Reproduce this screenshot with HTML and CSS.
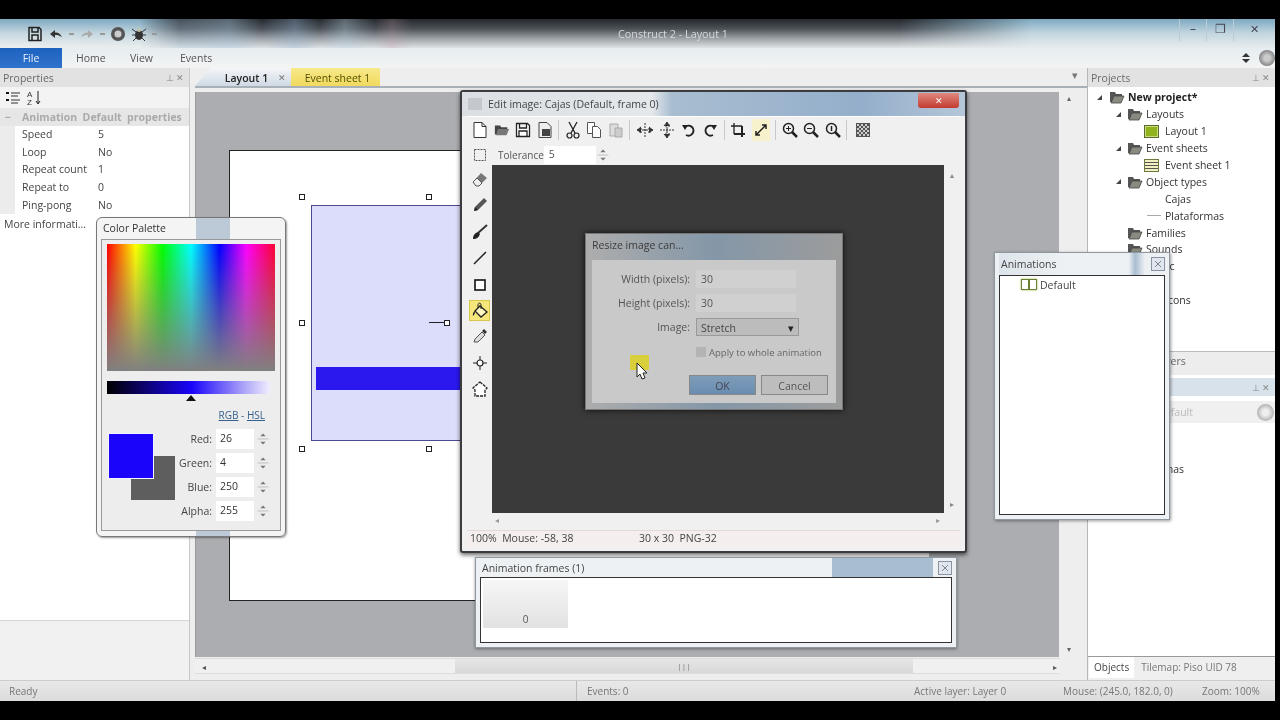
FILE: index.html
```html
<!DOCTYPE html>
<html lang="en">
<head>
<meta charset="utf-8">
<title>Construct 2 - Layout 1</title>
<link rel="stylesheet" href="styles.css">
</head>
<body>
<svg class="sprite" width="0" height="0">
  <symbol id="folder" viewBox="0 0 16 14"><path d="M1 2h5l1 2h6v2H5L3 12H1z" fill="#555"/><path d="M5 6h10l-3 7H2z" fill="#8a8a80" stroke="#444" stroke-width=".8"/></symbol>
  <symbol id="spin" viewBox="0 0 14 22"><path d="M4 8l3-3 3 3z M4 14l3 3 3-3z" fill="#777"/><path d="M1 11h12" stroke="#bbb"/></symbol>
  <symbol id="pin" viewBox="0 0 14 14"><rect x=".5" y=".5" width="13" height="13" fill="#dfe6ee" stroke="#8a93a0"/><path d="M4 4l6 6M10 4l-6 6" stroke="#667" stroke-width=".8"/></symbol>
</svg>
<div class="screen">
  <div class="app">
    <header class="titlebar">
      <div class="qat">
        <svg width="16" height="16" viewBox="0 0 16 16"><path d="M2 1.500h10l2 2v11H2z M5 2v4h6V2 M5 14V9h6v5" fill="none" stroke="#222" stroke-width="1.500"/></svg>
        <svg width="16" height="14" viewBox="0 0 16 14"><path d="M2 7l5-4v2.500c4 0 6 2 7 5-2-2-4-2.500-7-2.500v3z" fill="#333"/></svg>
        <span class="qat-dash"></span>
        <svg width="16" height="14" viewBox="0 0 16 14"><path d="M14 7L9 3v2.500c-4 0-6 2-7 5 2-2 4-2.500 7-2.500v3z" fill="#aaa"/></svg>
        <span class="qat-dash"></span>
        <svg width="16" height="16" viewBox="0 0 16 16"><circle cx="8" cy="8" r="7" fill="#555"/><circle cx="8" cy="8" r="3.500" fill="#ccc"/></svg>
        <svg width="16" height="16" viewBox="0 0 16 16"><ellipse cx="8" cy="9" rx="4" ry="5" fill="#333"/><path d="M1 3l4 3M15 3l-4 3M1 9h3M15 9h-3M2 15l3-3M14 15l-3-3" stroke="#333"/><circle cx="8" cy="4" r="2" fill="#c4c4a8"/></svg>
        <span class="qat-dash"></span>
      </div>
      <div class="title-text">Construct 2 - Layout 1</div>
      <div class="win-controls">
        <span class="wc">&#8211;</span><span class="wc">&#10064;</span><span class="wc wc-x">&#10005;</span>
      </div>
    </header>
    <nav class="ribbon">
      <div class="file-tab">File</div>
      <div class="rib-tab">Home</div>
      <div class="rib-tab">View</div>
      <div class="rib-tab">Events</div>
      <div class="rib-right">
        <svg width="12" height="14" viewBox="0 0 12 14"><path d="M2 6l4-4 4 4zM2 8l4 4 4-4z" fill="#333"/></svg>
        <span class="help-ball"></span>
      </div>
    </nav>
    <main class="main">
      <aside class="left">
        <div class="dock-head"><span>Properties</span><span class="dock-btns">&#8869;&nbsp;&#10005;</span></div>
        <div class="prop-tools">
          <svg width="16" height="14" viewBox="0 0 16 14"><path d="M6 2h9M6 5h7M6 9h9M6 12h7" stroke="#333"/><path d="M1 2h3M1 9h3" stroke="#111" stroke-width="2"/></svg>
          <svg width="16" height="16" viewBox="0 0 16 16"><path d="M12 1v12M10 11l2 3 2-3" stroke="#222" fill="none"/><text x="1" y="7" class="sort-text">A</text><text x="1" y="15" class="sort-text">Z</text></svg>
        </div>
        <div class="prop-section"><span class="prop-minus">&#8722;</span>Animation&nbsp; Default&nbsp; properties</div>
        <div class="prop-row"><span class="prop-key">Speed</span><span>5</span></div>
        <div class="prop-row"><span class="prop-key">Loop</span><span>No</span></div>
        <div class="prop-row"><span class="prop-key">Repeat count</span><span>1</span></div>
        <div class="prop-row"><span class="prop-key">Repeat to</span><span>0</span></div>
        <div class="prop-row"><span class="prop-key">Ping-pong</span><span>No</span></div>
        <div class="prop-more">More informati...</div>
        <div class="prop-spacer"></div>
        <div class="prop-help"></div>
      </aside>
      <section class="centre">
        <div class="doc-tabs">
          <div class="doc-tab doc-active">Layout 1<span class="doc-x">&#10005;</span></div>
          <div class="doc-tab doc-yellow">Event sheet 1</div>
          <span class="doc-menu">&#9662;</span>
        </div>
        <div class="doc-body">
          <div class="canvas-row">
            <div class="canvas">
              <div class="page"></div>
              <div class="object"><div class="object-bar"></div></div>
              <i class="handle h1"></i><i class="handle h2"></i><i class="handle h3"></i><i class="handle h4"></i><i class="handle h5"></i>
              <i class="rot-line"></i><i class="handle h6"></i>
            </div>
            <div class="vscroll"><span>&#9652;</span><span>&#9662;</span></div>
          </div>
          <div class="hscroll"><span class="arr">&#9666;</span><div class="hthumb"><span class="grip">|||</span></div><span class="arr">&#9656;</span></div>
        </div>
      </section>
      <aside class="right">
        <div class="dock-head"><span>Projects</span><span class="dock-btns">&#8869;&nbsp;&#10005;</span></div>
        <ul class="tree">
          <li class="t0 bold"><b class="tw"></b><svg class="fo"><use href="#folder"/></svg>New project*</li>
          <li class="t1"><b class="tw"></b><svg class="fo"><use href="#folder"/></svg>Layouts</li>
          <li class="t2"><span class="ico-layout"></span>Layout 1</li>
          <li class="t1"><b class="tw"></b><svg class="fo"><use href="#folder"/></svg>Event sheets</li>
          <li class="t2"><span class="ico-sheet"></span>Event sheet 1</li>
          <li class="t1"><b class="tw"></b><svg class="fo"><use href="#folder"/></svg>Object types</li>
          <li class="t3">Cajas</li>
          <li class="t3 dash">Plataformas</li>
          <li class="t1 nw"><svg class="fo"><use href="#folder"/></svg>Families</li>
          <li class="t1 nw"><svg class="fo"><use href="#folder"/></svg>Sounds</li>
          <li class="t1 nw"><svg class="fo"><use href="#folder"/></svg>Music</li>
          <li class="t1 nw"><svg class="fo"><use href="#folder"/></svg>Files</li>
          <li class="t3">Icons</li>
        </ul>
        <div class="layers-tab">Layers</div>
        <div class="obj-head"><span>Objects</span><span class="dock-btns">&#8869;&nbsp;&#10005;</span></div>
        <div class="obj-search"><span class="obj-filter">Default</span><span class="help-ball small"></span></div>
        <ul class="obj-list"><li>Cajas</li><li>Plataformas</li></ul>
        <div class="right-tabs"><span class="rt-active">Objects</span><span class="rt-info">Tilemap: Piso UID 78</span></div>
      </aside>
    </main>
    <footer class="status">
      <span class="st-ready">Ready</span>
      <span class="st-events">Events: 0</span>
      <span class="st-layer">Active layer: Layer 0</span>
      <span class="st-mouse">Mouse: (245.0, 182.0, 0)</span>
      <span class="st-zoom">Zoom: 100%</span>
    </footer>
  </div>

  <section class="win palette">
    <div class="pal-title">Color Palette</div>
    <div class="pal-body">
      <div class="pal-grad"></div>
      <div class="pal-lum"></div>
      <div class="pal-tri"></div>
      <div class="pal-links"><u>RGB</u> - <u>HSL</u></div>
      <div class="pal-lower">
        <div class="swatches"><div class="sw-back"></div><div class="sw-front"></div></div>
        <div class="pal-fields">
          <div class="pf"><label>Red:</label><span class="pf-in">26</span><svg class="pf-spin"><use href="#spin"/></svg></div>
          <div class="pf"><label>Green:</label><span class="pf-in">4</span><svg class="pf-spin"><use href="#spin"/></svg></div>
          <div class="pf"><label>Blue:</label><span class="pf-in">250</span><svg class="pf-spin"><use href="#spin"/></svg></div>
          <div class="pf"><label>Alpha:</label><span class="pf-in">255</span><svg class="pf-spin"><use href="#spin"/></svg></div>
        </div>
      </div>
    </div>
  </section>

  <section class="win editor">
    <div class="ed-title"><span class="ed-name">Edit image: Cajas (Default, frame 0)</span><span class="ed-close">&#10005;</span></div>
    <div class="ed-tools">
      <svg width="16" height="18" viewBox="0 0 16 18"><path d="M2 1.500h8l4 4v11H2z M10 1.500v4h4" fill="#fff" stroke="#333"/></svg>
      <svg width="16" height="18" viewBox="0 0 18 18"><path d="M1 4h6l1 2h7v2H5l-2 6H1z" fill="#444"/><path d="M5 8h12l-3 7H2z" fill="#777"/></svg>
      <svg width="16" height="16" viewBox="0 0 16 16"><path d="M1.500 1.500h11l2 2v11h-13z M4.500 2v4h7V2 M4 14V9h8v5" fill="#fff" stroke="#222" stroke-width="1.300"/></svg>
      <svg width="16" height="18" viewBox="0 0 16 18"><path d="M2 1.500h8l4 4v11H2z" fill="#eee" stroke="#444"/><rect x="5" y="8" width="8" height="7" fill="#444"/></svg>
      <i class="sep"></i>
      <svg width="16" height="18" viewBox="0 0 16 18"><path d="M4 1l6 11M12 1L6 12" stroke="#222" stroke-width="1.300"/><circle cx="4.500" cy="14.500" r="2.500" fill="none" stroke="#222" stroke-width="1.200"/><circle cx="11.500" cy="14.500" r="2.500" fill="none" stroke="#222" stroke-width="1.200"/></svg>
      <svg width="16" height="18" viewBox="0 0 16 18"><path d="M1.500 1.500h7v11h-7z" fill="#fff" stroke="#555"/><path d="M6.500 5.500h5l3 3v8h-8z" fill="#fff" stroke="#555"/></svg>
      <svg width="16" height="18" viewBox="0 0 16 18"><path d="M2 3h8v12H2z" fill="#ddd" stroke="#aaa"/><path d="M7 7h7v9H7z" fill="#ccc" stroke="#aaa"/></svg>
      <i class="sep"></i>
      <svg width="18" height="16" viewBox="0 0 18 16"><path d="M1 8l4-3v6zM17 8l-4-3v6zM9 1v14" stroke="#333" fill="#333" stroke-dasharray="2 1"/><path d="M6 8h6" stroke="#333"/></svg>
      <svg width="16" height="18" viewBox="0 0 16 18"><path d="M8 1L5 5h6zM8 17l-3-4h6zM1 9h14" stroke="#333" fill="#333" stroke-dasharray="2 1"/><path d="M8 6v6" stroke="#333"/></svg>
      <svg width="16" height="16" viewBox="0 0 16 16"><path d="M4 5a5 5 0 1 1 1 8" fill="none" stroke="#222" stroke-width="2"/><path d="M1 3l6 0-3 5z" fill="#222"/></svg>
      <svg width="16" height="16" viewBox="0 0 16 16"><path d="M12 5a5 5 0 1 0-1 8" fill="none" stroke="#222" stroke-width="2"/><path d="M15 3l-6 0 3 5z" fill="#222"/></svg>
      <i class="sep"></i>
      <svg width="16" height="16" viewBox="0 0 16 16"><path d="M4 1v11M1 4h11" stroke="#222" stroke-width="1.300"/><path d="M4 12h11M12 4v11" stroke="#222" stroke-width="2"/></svg>
      <span class="ed-active"><svg width="16" height="16" viewBox="0 0 16 16"><path d="M3 13L13 3M9 3h4v4M3 9v4h4" fill="none" stroke="#222" stroke-width="1.500"/></svg></span>
      <i class="sep"></i>
      <svg width="16" height="16" viewBox="0 0 16 16"><circle cx="6.500" cy="6.500" r="5" fill="#eee" stroke="#222" stroke-width="1.500"/><path d="M10 10l5 5" stroke="#222" stroke-width="2.500"/><path d="M4 6.500h5M6.500 4v5" stroke="#222"/></svg>
      <svg width="16" height="16" viewBox="0 0 16 16"><circle cx="6.500" cy="6.500" r="5" fill="#eee" stroke="#222" stroke-width="1.500"/><path d="M10 10l5 5" stroke="#222" stroke-width="2.500"/><path d="M4 6.500h5" stroke="#222"/></svg>
      <svg width="16" height="16" viewBox="0 0 16 16"><circle cx="6.500" cy="6.500" r="5" fill="#eee" stroke="#222" stroke-width="1.500"/><path d="M10 10l5 5" stroke="#222" stroke-width="2.500"/><path d="M6.500 4v5" stroke="#222" stroke-width="1.500"/></svg>
      <i class="sep"></i>
      <span class="ed-checker"></span>
    </div>
    <div class="ed-row2">
      <svg width="14" height="14" viewBox="0 0 14 14"><rect x="1.500" y="1.500" width="11" height="11" fill="none" stroke="#555" stroke-dasharray="2 1"/></svg>
      <span class="ed-tol">Tolerance</span>
      <span class="ed-tolin">5</span>
      <svg class="tol-spin"><use href="#spin"/></svg>
    </div>
    <div class="ed-work">
      <div class="ed-side">
        <svg width="16" height="16" viewBox="0 0 16 16"><path d="M1 11L9 2l6 5-8 8H4z" fill="#777"/><path d="M1 11l4-4 5 5-3 3H4z" fill="#eee" stroke="#555"/></svg>
        <svg width="16" height="16" viewBox="0 0 16 16"><path d="M2 14l1-4L12 1l3 3-9 9z" fill="#555"/><path d="M2 14l1-4 3 3z" fill="#222"/></svg>
        <svg width="16" height="16" viewBox="0 0 16 16"><path d="M15 1L6 9" stroke="#333" stroke-width="2"/><path d="M1 15c0-4 2-6 5-7l2 2c-1 3-3 5-7 5z" fill="#222"/></svg>
        <svg width="16" height="16" viewBox="0 0 16 16"><path d="M2 14L14 2" stroke="#222" stroke-width="1.500"/></svg>
        <svg width="16" height="16" viewBox="0 0 16 16"><rect x="3" y="3" width="10" height="10" fill="#fff" stroke="#111" stroke-width="1.600"/></svg>
        <span class="ed-fill"><svg width="16" height="16" viewBox="0 0 16 16"><path d="M8 4l7 6-6 5-6-6z" fill="#fff6c0" stroke="#222" stroke-width="1.300"/><path d="M6 6V3c0-2.500 3-2.500 3 0v4" fill="none" stroke="#222"/><path d="M3 9C1 10 .5 12 1 14c1.500-1 2-3 2-5z" fill="#222"/></svg></span>
        <svg width="16" height="16" viewBox="0 0 16 16"><path d="M2 14l1-3 7-7 3 3-7 7z" fill="#ddd" stroke="#555"/><path d="M10 3l2-2 3 3-2 2z" fill="#333"/></svg>
        <svg width="16" height="16" viewBox="0 0 16 16"><circle cx="8" cy="8" r="3" fill="#fff" stroke="#222" stroke-width="1.200"/><path d="M8 1v4M8 11v4M1 8h4M11 8h4" stroke="#222"/></svg>
        <svg width="16" height="16" viewBox="0 0 16 16"><path d="M8 1l7 6-2 2v6H3V9L1 7z" fill="#fff" stroke="#222" stroke-width="1.300" stroke-dasharray="3 1"/></svg>
      </div>
      <div class="ed-canvas">
        <div class="dlg">
          <div class="dlg-title">Resize image can...</div>
          <div class="dlg-body">
            <div class="dlg-row"><label>Width (pixels):</label><span class="dlg-in">30</span></div>
            <div class="dlg-row"><label>Height (pixels):</label><span class="dlg-in">30</span></div>
            <div class="dlg-row"><label>Image:</label><span class="dlg-sel">Stretch<i>&#9662;</i></span></div>
            <div class="dlg-check"><i class="dlg-box"></i>Apply to whole animation</div>
            <div class="dlg-btns"><span class="dlg-ok">OK</span><span class="dlg-cancel">Cancel</span></div>
          </div>
        </div>
        <div class="cursor-mark">
          <svg width="14" height="20" viewBox="0 0 14 20"><path d="M2 1v14l3-3 2 5 3-1-2-5h4z" fill="#fff" stroke="#222"/></svg>
        </div>
      </div>
      <div class="ed-vs"><span>&#9652;</span><span>&#9656;</span></div>
    </div>
    <div class="ed-hs"><span>&#9666;</span><span>&#9656;</span></div>
    <div class="ed-status"><span class="es-a">100%&nbsp; Mouse: -58, 38</span><span>30 x 30&nbsp; PNG-32</span></div>
  </section>

  <section class="win frames">
    <div class="bar-title"><span>Animation frames (1)</span><svg class="pin"><use href="#pin"/></svg></div>
    <div class="list-box frames-box"><div class="thumb">0</div></div>
  </section>

  <section class="win anims">
    <div class="bar-title"><span>Animations</span><svg class="pin"><use href="#pin"/></svg></div>
    <div class="list-box anims-box"><div class="anim-row"><span class="ico-anim"></span>Default</div></div>
  </section>
</div>
</body>
</html>
```
FILE: styles.css
```css
* { box-sizing: border-box; }
html, body { margin: 0; height: 100%; background: #000; overflow: hidden; }
body { font-family: "Open Sans", "Noto Sans", sans-serif; font-size: 10.500px; color: #333; }
ul { list-style: none; margin: 0; padding: 0; }
.sprite { position: absolute; }
.screen { position: relative; width: 1280px; height: 720px; padding: 19px 5px 19px 0; filter: blur(.45px); }
.app { width: 1275px; height: 682px; display: flex; flex-direction: column; background: #ececec; }

.titlebar { height: 29px; display: flex; align-items: center; position: relative;
  background:
    linear-gradient(180deg, rgba(120,165,190,.95) 0, rgba(170,200,215,.6) 14px, rgba(232,238,241,.2) 28px),
    linear-gradient(90deg, #eceeee 0, #e8ecec 150px, #e4e9eb 1275px); }
.titlebar::before { content: ""; position: absolute; inset: 0;
  background:
    linear-gradient(90deg, transparent 100px, rgba(170,200,225,.4) 230px, transparent 262px, rgba(150,180,215,.35) 295px, transparent 320px, rgba(190,215,230,.35) 345px, transparent 375px, rgba(195,150,165,.25) 392px, transparent 412px),
    linear-gradient(180deg, #24282c 0, #4d5359 10px, #989ea3 19px, #dfe3e5 29px);
  -webkit-mask-image: linear-gradient(90deg, transparent 140px, #000 180px, #000 900px, transparent 1030px);
  mask-image: linear-gradient(90deg, transparent 140px, #000 180px, #000 900px, transparent 1030px); }
.qat { display: flex; align-items: center; gap: 5px; padding-left: 27px; position: relative; }
.qat-dash { width: 5px; height: 2px; background: #999; }
.title-text { position: absolute; left: 618px; top: 7px; color: #d4d8dc; font-size: 10.800px; }
.win-controls { margin-left: auto; display: flex; height: 23px; align-self: flex-start; position: relative; }
.wc { width: 27px; text-align: center; color: #445; font-size: 12px; line-height: 20px; border-left: 1px solid #b9ccd8; border-bottom: 1px solid #d8e2e8; }
.wc-x { width: 42px; font-size: 11px; }

.ribbon { height: 20px; display: flex; align-items: center; background: linear-gradient(180deg, #e6edf0, #f3f4f4); color: #555; }
.file-tab { width: 62px; height: 20px; background: linear-gradient(180deg, #1e62c0, #2f73cc); color: #e8f0fb; text-align: center; line-height: 20px; margin-right: 14px; }
.rib-tab { width: 50px; line-height: 20px; }
.rib-tab:nth-child(2) { width: 54px; }
.rib-right { margin-left: auto; display: flex; align-items: center; gap: 7px; }
.help-ball { width: 16px; height: 16px; border-radius: 50%; background: radial-gradient(circle, #ccc 25%, #666 90%); display: block; }
.help-ball.small { width: 17px; height: 17px; background: radial-gradient(circle, #eee 25%, #999 90%); }

.main { flex: 1; display: flex; min-height: 0; }
.left { width: 190px; display: flex; flex-direction: column; background: #fff; border-right: 1px solid #c8c8c8; }
.dock-head { height: 19px; display: flex; justify-content: space-between; align-items: center; padding: 0 5px 0 3px; background: #e2e2e2; color: #6a6a6a; flex: none; }
.dock-btns { font-size: 9px; color: #888; }
.prop-tools { height: 21px; flex: none; display: flex; align-items: center; gap: 5px; padding-left: 5px; background: #f3f3f3; }
.sort-text { font-size: 8px; font-family: "Liberation Sans", sans-serif; fill: #333; }
.prop-section { height: 18px; flex: none; background: #e6e6e6; color: #aaa; font-weight: 700; line-height: 18px; white-space: nowrap; overflow: hidden; }
.prop-minus { display: inline-block; width: 22px; padding-left: 5px; }
.prop-row { height: 17.700px; flex: none; display: flex; line-height: 17.700px; background: linear-gradient(90deg, #ececec 15px, #fff 15px); color: #444; }
.prop-key { width: 98px; padding-left: 22px; flex: none; }
.prop-more { height: 19px; flex: none; margin-top: 1px; line-height: 19px; padding-left: 4px; color: #444; }
.prop-spacer { flex: 1; }
.prop-help { height: 60px; flex: none; background: #f1f1f1; border-top: 1px solid #d4d4d4; }

.centre { flex: 1; min-width: 0; display: flex; flex-direction: column; padding-left: 5px; background: #eeeeee; }
.doc-tabs { height: 20px; flex: none; display: flex; align-items: stretch; border-bottom: 2px solid #a8b0b8; position: relative; }
.doc-tab { display: flex; align-items: center; justify-content: center; color: #222; padding-top: 1px; }
.doc-active { width: 96px; font-weight: 600; padding-left: 25px; background: linear-gradient(180deg, #f4f6f8, #cfd9e4); clip-path: polygon(0 100%, 16px 0, 100% 0, 100% 100%); gap: 10px; }
.doc-x { color: #777; font-weight: 400; font-size: 9px; }
.doc-yellow { width: 89px; padding-left: 4px; background: linear-gradient(180deg, #f7e98a, #f1d95e); color: #555000; }
.doc-menu { margin-left: auto; margin-right: 9px; color: #777; }
.doc-body { flex: 1; display: flex; flex-direction: column; min-height: 0; padding-top: 4px; }
.canvas-row { height: 565px; flex: none; display: flex; }
.canvas { width: 864px; position: relative; background: #acadb0; overflow: hidden; border-left: 1px solid #999; }
.page { position: absolute; left: 33px; top: 58px; width: 700px; height: 451px; background: #fff; border-left: 1px solid #222; border-top: 1px solid #222; border-bottom: 1px solid #222; }
.object { position: absolute; left: 115px; top: 113px; width: 240px; height: 236px; background: #dcdcfb; border: 1px solid #4a4a8c; }
.object-bar { position: absolute; left: 4px; top: 161px; width: 230px; height: 23px; background: #2a18ee; }
.handle { position: absolute; width: 6px; height: 6px; background: #fff; border: 1px solid #222; }
.h1 { left: 103px; top: 102px; } .h2 { left: 230px; top: 102px; } .h3 { left: 103px; top: 228px; }
.h4 { left: 103px; top: 354px; } .h5 { left: 230px; top: 354px; } .h6 { left: 248px; top: 228px; }
.rot-line { position: absolute; left: 233px; top: 230px; width: 16px; height: 1px; background: #222; }
.vscroll { width: 20px; display: flex; flex-direction: column; justify-content: space-between; align-items: center; color: #666; font-size: 8px; background: #eee; padding-bottom: 3px; }
.hscroll { height: 16px; margin-top: 1px; margin-right: 27px; display: flex; align-items: center; justify-content: space-between; padding: 0 0 0 4px; background: #f0f0f0; border-top: 1px solid #ddd; border-bottom: 1px solid #ddd; font-size: 8px; color: #555; position: relative; }
.hthumb { position: absolute; left: 260px; width: 458px; height: 14px; background: linear-gradient(180deg, #e6e6e6, #d8d8d8); text-align: center; line-height: 14px; }
.arr { padding: 0 3px; }
.grip { color: #777; font-size: 8px; }

.right { width: 188px; flex: none; display: flex; flex-direction: column; background: #fff; border-left: 1px solid #b8b8b8; }
.tree { height: 264px; flex: none; padding-top: 2px; overflow: hidden; }
.tree li { height: 16.900px; display: flex; align-items: center; color: #333; white-space: nowrap; font-size: 10.500px; }
.tree .bold { font-weight: 700; color: #222; }
.t0 { padding-left: 9px; } .t1 { padding-left: 28px; } .t2 { padding-left: 56px; } .t3 { padding-left: 77px; }
.t1.nw { padding-left: 39px; }
.tw { width: 0; height: 0; border-left: 5px solid transparent; border-bottom: 5px solid #444; margin-right: 6px; }
.t0 .tw { margin-right: 7px; }
.fo { width: 16px; height: 14px; margin-right: 3px; flex: none; }
.ico-layout { width: 15px; height: 13px; margin-right: 6px; background: #8fb21d; border: 1px solid #5c6a30; box-shadow: inset 0 0 0 1px #c9dc7b; }
.ico-sheet { width: 15px; height: 13px; margin-right: 6px; border: 1px solid #6a7a40; background: repeating-linear-gradient(180deg, #f2f0c0 0 2px, #555 2px 3px); }
.dash { position: relative; }
.dash::before { content: ""; position: absolute; left: 59px; top: 8px; width: 14px; height: 1px; background: #aaa; }
.layers-tab { height: 24px; flex: none; background: #ededed; border-top: 1px solid #bbb; padding-left: 66px; line-height: 19px; color: #666; }
.obj-head { height: 18px; flex: none; margin-top: 3px; display: flex; justify-content: space-between; align-items: center; padding: 0 5px 0 4px; background: #d8e2ea; color: #666; }
.obj-search { height: 22px; flex: none; margin-top: 5px; display: flex; align-items: center; justify-content: flex-end; gap: 4px; padding-right: 1px; background: #f0f0f0; color: #bbb; }
.obj-filter { margin-right: 60px; }
.obj-list { flex: 1; padding: 21px 0 0 37px; }
.obj-list li { height: 17px; line-height: 17px; color: #333; }
.right-tabs { height: 24px; flex: none; display: flex; align-items: center; padding-bottom: 3px; border-top: 1px solid #999; background: #efefef; font-size: 10px; }
.rt-active { background: #fff; padding: 0 5px; line-height: 21px; margin: 0 7px 0 1px; color: #444; }
.rt-info { color: #777; }

.status { height: 21px; flex: none; position: relative; background: linear-gradient(180deg, #e8e8e8, #dcdcdc); color: #777; border-top: 1px solid #ccc; line-height: 20px; display: flex; font-size: 10px; }
.st-ready { width: 577px; padding-left: 9px; border-right: 1px solid #bbb; }
.st-events { width: 337px; padding-left: 10px; }
.st-layer { width: 149px; }
.st-mouse { width: 139px; }

.win { position: absolute; }
.palette { left: 96px; top: 217px; width: 190px; height: 320px; background: linear-gradient(90deg, #f4f4f4 99px, #bcc9d6 99px, #bcc9d6 133px, #f4f4f4 133px); border: 1px solid #777; border-radius: 6px; box-shadow: 1px 1px 2px rgba(0,0,0,.4); display: flex; flex-direction: column; }
.pal-title { height: 21px; flex: none; padding: 3px 6px; color: #333; font-size: 10.500px; }
.pal-body { flex: 1; margin: 0 4px 5px; border: 1px solid #999; padding: 4px 5px 0; display: flex; flex-direction: column; background: #ededed; }
.pal-grad { height: 127px; flex: none; width: 168px; background:
  linear-gradient(180deg, rgba(128,128,128,0), #808080),
  linear-gradient(90deg, #f00, #ff0 17%, #0f0 33%, #0ff 50%, #00f 67%, #f0f 83%, #f03); }
.pal-lum { width: 163px; height: 13px; flex: none; margin-top: 10px; background: linear-gradient(90deg, #000, #1a04fa 52%, #b0a8f8 85%, #f0eefe); }
.pal-tri { width: 0; height: 0; margin: 1px 0 0 79px; flex: none; border: 5px solid transparent; border-top: 0; border-bottom: 6px solid #111; }
.pal-links { margin: 7px 4px 0 0; text-align: right; color: #35608c; font-size: 10px; padding-right: 6px; height: 15px; line-height: 15px; flex: none; }
.pal-lower { display: flex; margin-top: 6px; flex: 1; position: relative; }
.swatches { width: 68px; height: 68px; flex: none; position: relative; margin: 5px 0 0 2px; }
.sw-back { position: absolute; left: 22px; top: 22px; width: 44px; height: 44px; background: #5e5e5e; }
.sw-front { position: absolute; left: 0; top: 0; width: 44px; height: 44px; background: #1a04fa; box-shadow: 0 0 0 1px #f4f4ff; }
.pal-fields { flex: 1; display: flex; flex-direction: column; gap: 4px; margin-left: -2px; }
.pf { height: 20px; display: flex; align-items: center; }
.pf label { width: 37px; text-align: right; color: #444; flex: none; }
.pf-in { width: 38px; height: 20px; margin-left: 4px; padding-left: 4px; line-height: 19px; background: #fff; flex: none; }
.pf-spin { width: 14px; height: 20px; margin-left: 2px; flex: none; }

.editor { left: 460px; top: 90px; width: 507px; height: 463px; background: #f0f0f0; border: 2px solid #3c3c40; border-radius: 3px; box-shadow: 0 2px 4px rgba(0,0,0,.6); display: flex; flex-direction: column; padding: 0 5px 3px; }
.ed-title { height: 24px; flex: none; margin: 0 -5px; padding: 0 6px 0 6px; display: flex; justify-content: space-between; align-items: center; color: #444; background: linear-gradient(90deg, #dadfe3 0, #e4e8eb 190px, #a8bdd0 210px, #94aecb 400px, #b4c6d8 500px); }
.ed-name { display: flex; align-items: center; gap: 6px; }
.ed-name::before { content: ""; width: 14px; height: 12px; background: #c4c8cc; }
.ed-close { width: 41px; height: 15px; margin-top: -7px; background: linear-gradient(180deg, #e08a80, #c23a30); color: #fff; text-align: center; font-size: 9px; line-height: 15px; border-radius: 0 0 3px 3px; }
.ed-tools { height: 26px; flex: none; display: flex; align-items: center; gap: 5.500px; padding-left: 5px; border-top: 1px solid #fff; }
.sep { width: 1px; height: 20px; background: #c8c8c8; }
.ed-active { display: flex; height: 22px; align-items: center; padding: 0 1px; background: #f8f2cc; }
.ed-checker { width: 14px; height: 14px; margin-left: 3px; background: repeating-conic-gradient(#555 0 25%, #ccc 0 50%) 0 0 / 4px 4px; border: 1px solid #555; }
.ed-row2 { height: 23px; flex: none; display: flex; align-items: center; padding: 2px 0 0 6px; }
.ed-tol { margin-left: 11px; color: #555; font-size: 10px; }
.ed-tolin { width: 52px; height: 18px; padding-left: 5px; line-height: 17px; background: #fff; color: #555; }
.tol-spin { width: 14px; height: 20px; }
.ed-work { height: 348px; flex: none; display: flex; }
.ed-side { width: 25px; flex: none; display: flex; flex-direction: column; align-items: center; gap: 10.400px; padding: 6px 0 0; }
.ed-fill { display: flex; width: 21px; height: 21px; margin: -3px 0; align-items: center; justify-content: center; background: #f5e77c; border: 1px solid #d8c84a; }
.ed-canvas { width: 452px; flex: none; position: relative; background: #3a3a3a; }
.ed-vs { flex: 1; display: flex; flex-direction: column; justify-content: space-between; align-items: center; color: #888; font-size: 8px; padding: 4px 0; }
.ed-hs { height: 17px; flex: none; display: flex; justify-content: space-between; padding: 0 20px 0 28px; color: #999; font-size: 8px; line-height: 14px; }
.ed-status { flex: 1; display: flex; align-items: center; padding: 0 0 3px 3px; background: #f4eeee; border-top: 1px solid #e4d8d8; color: #444; }
.es-a { width: 169px; }

.dlg { position: absolute; left: 93px; top: 68px; width: 258px; height: 177px; background: linear-gradient(90deg, #adadad, #8497a8 50%, #9c9c9c); border: 1px solid #777; box-shadow: 0 0 6px rgba(0,0,0,.8); padding: 0 6px 6px; display: flex; flex-direction: column; filter: blur(.7px); }
.dlg-title { height: 26px; flex: none; line-height: 22px; color: #3c3c3c; }
.dlg-body { flex: 1; background: #c9c9c9; padding-top: 10px; color: #555; display: flex; flex-direction: column; }
.dlg-row { height: 18px; display: flex; align-items: center; margin-bottom: 6px; }
.dlg-row label { width: 98px; text-align: right; margin-right: 6px; }
.dlg-in { width: 100px; height: 18px; padding-left: 5px; line-height: 18px; background: #d0d0d0; }
.dlg-sel { width: 103px; height: 18px; padding: 0 4px; line-height: 18px; background: #bcbcbc; border: 1px solid #999; color: #444; display: flex; justify-content: space-between; }
.dlg-sel i { font-style: normal; color: #222; }
.dlg-check { margin: 2px 0 0 104px; display: flex; align-items: center; font-size: 9.500px; gap: 3px; color: #666; height: 16px; white-space: nowrap; }
.dlg-box { width: 10px; height: 10px; background: #b4b4b4; }
.dlg-btns { display: flex; gap: 5px; margin: 15px 0 0 97px; }
.dlg-ok, .dlg-cancel { width: 67px; height: 20px; line-height: 20px; text-align: center; border: 1px solid #888; }
.dlg-ok { background: linear-gradient(180deg, #7d9cb8, #6a8db0); color: #445; }
.dlg-cancel { background: #bdbdbd; }
.cursor-mark { position: absolute; left: 138px; top: 190px; width: 19px; height: 22px; background: linear-gradient(180deg, #d9cf3a 70%, transparent 70%); }
.cursor-mark svg { position: absolute; left: 5px; top: 7px; }

.frames { left: 475px; top: 557px; width: 482px; height: 91px; background: #eef1f3; border: 1px solid #8f98a0; box-shadow: 0 1px 3px rgba(0,0,0,.4); display: flex; flex-direction: column; padding: 0 4px 4px; }
.anims { left: 994px; top: 252px; width: 176px; height: 268px; background: #eef1f3; border: 1px solid #8f98a0; box-shadow: 1px 1px 3px rgba(0,0,0,.4); display: flex; flex-direction: column; padding: 0 4px 4px; }
.bar-title { height: 19px; flex: none; display: flex; justify-content: space-between; align-items: center; padding-left: 2px; color: #444; }
.frames .bar-title { background: linear-gradient(90deg, transparent 74.500%, #a8bdd0 74.500%, #a8bdd0 96%, transparent 96%); }
.anims .bar-title { height: 22px; background: linear-gradient(90deg, #dde5ec 0, transparent 40%, transparent 78%, #a8bdd0 82%, transparent 88%); }
.pin { width: 14px; height: 14px; flex: none; }
.list-box { flex: 1; background: #fff; border: 1px solid #333; }
.thumb { width: 85px; height: 48px; margin: 2px; padding-top: 32px; text-align: center; font-size: 10px; color: #555; background: linear-gradient(180deg, #f6f6f6, #e2e2e2); }
.anim-row { display: flex; align-items: center; gap: 3px; padding-left: 21px; height: 17px; color: #444; }
.ico-anim { width: 16px; height: 11px; border: 1px solid #6a8030; background: linear-gradient(90deg, #fff 45%, #6a8030 45%, #6a8030 55%, #fff 55%); box-shadow: 0 0 2px #9db84a; }
```
